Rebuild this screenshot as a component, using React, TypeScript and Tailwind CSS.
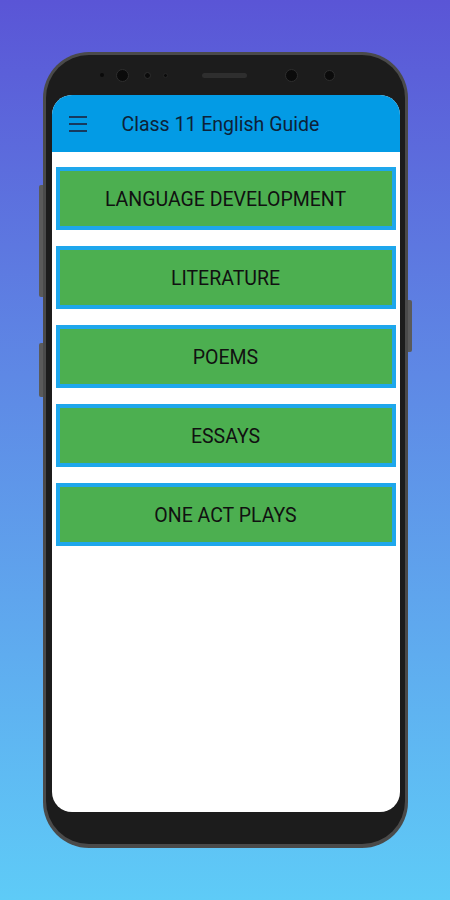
import React from "react";

const items = ["LANGUAGE DEVELOPMENT", "LITERATURE", "POEMS", "ESSAYS", "ONE ACT PLAYS"];

export default function App() {
  return (
    <div
      className="w-[450px] h-[900px] bg-gradient-to-b from-[#5a55d6] to-[#5ecbf7] flex justify-center pt-[52px] overflow-hidden"
      style={{ fontFamily: "Roboto, 'Liberation Sans', sans-serif" }}
    >
      <div className="relative w-[365px] h-[796px] rounded-[46px] bg-[#4a4a4a] p-[3px] pb-[4px]">
        {/* side buttons */}
        <div className="absolute left-[-4px] top-[133px] w-[4px] h-[112px] rounded-l-[2px] bg-[#5a5a5a]" />
        <div className="absolute left-[-4px] top-[291px] w-[4px] h-[54px] rounded-l-[2px] bg-[#5a5a5a]" />
        <div className="absolute right-[-4px] top-[248px] w-[4px] h-[52px] rounded-r-[2px] bg-[#5a5a5a]" />
        <div className="h-full w-full rounded-[43px] bg-[#1c1c1c] flex flex-col pl-[6px] pr-[5px]">
          {/* top bezel */}
          <div className="h-[40px] flex items-center pl-[48px] shrink-0">
            <div className="w-[4px] h-[4px] rounded-full bg-[#0a0a0a]" />
            <div className="ml-[12px] w-[13px] h-[13px] rounded-full bg-[#0b0b0b] border border-[#2e2e2e]" />
            <div className="ml-[15px] w-[7px] h-[7px] rounded-full bg-[#0b0b0b] border border-[#2e2e2e]" />
            <div className="ml-[12px] w-[5px] h-[5px] rounded-full bg-[#0b0b0b] border border-[#262626]" />
            <div className="ml-[34px] w-[45px] h-[5px] rounded-full bg-[#2e2e2e]" />
            <div className="ml-[38px] w-[13px] h-[13px] rounded-full bg-[#0b0b0b] border border-[#2e2e2e]" />
            <div className="ml-[26px] w-[11px] h-[11px] rounded-full bg-[#0b0b0b] border border-[#2e2e2e]" />
          </div>
          {/* screen */}
          <div className="h-[717px] rounded-[20px] bg-white overflow-hidden flex flex-col">
            <div className="h-[57px] bg-[#039be5] flex items-center shrink-0">
              <div className="ml-[17px] w-[18px] flex flex-col gap-[5px]">
                <div className="h-[2px] bg-[#173a5e]" />
                <div className="h-[2px] bg-[#173a5e]" />
                <div className="h-[2px] bg-[#173a5e]" />
              </div>
              <div className="ml-[35px] mt-[2px] text-[19.5px] text-[#0d2238] leading-none">Class 11 English Guide</div>
            </div>
            <div className="flex flex-col gap-[16px] pt-[15px] px-[4px]">
              {items.map((t) => (
                <div
                  key={t}
                  className="h-[63px] border-[4px] border-[#1ea7ec] bg-[#4caf50] flex items-center justify-center text-[19.5px] text-[#111] pt-[2px]"
                >
                  {t}
                </div>
              ))}
            </div>
          </div>
        </div>
      </div>
    </div>
  );
}
